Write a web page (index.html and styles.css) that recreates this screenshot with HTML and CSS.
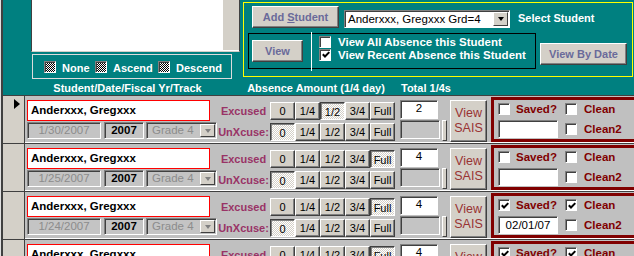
FILE: index.html
```html
<!DOCTYPE html>
<html lang="en">
<head>
    <meta charset="UTF-8">
    <title>Student Absence</title>
    <link rel="stylesheet" href="styles.css">
</head>
<body>
<div class="form">
  <div class="frame">
    <div class="head">
      <div class="head-top">
        <div class="list-col">
          <div class="listbox"><div class="list-scroll"></div></div>
          <div class="sort-frame">
            <div class="opt opt-none"><span class="chk dither"></span><span class="opt-text">None</span></div>
            <div class="opt opt-asc"><span class="chk dither"></span><span class="opt-text">Ascend</span></div>
            <div class="opt"><span class="chk dither"></span><span class="opt-text">Descend</span></div>
          </div>
        </div>
        <div class="student-panel">
          <div class="row-a">
            <button class="btn btn-add">Add <u>S</u>tudent</button>
            <div class="combo sunk">
              <span class="combo-text">Anderxxx, Gregxxx Grd=4</span>
              <span class="combo-arrow"><span class="arrow"></span></span>
            </div>
            <span class="select-label">Select Student</span>
          </div>
          <div class="row-b">
            <div class="view-box">
              <button class="btn btn-view">View</button>
              <div class="vline"></div>
              <div class="view-opts">
                <div class="view-opt"><span class="chk"></span>View All Absence this Student</div>
                <div class="view-opt"><span class="chk"><svg viewBox="0 0 8 8" width="8" height="8"><path d="M0.8 3.2l2.2 2.3 4.3-4.4" fill="none" stroke="#000" stroke-width="2"/></svg></span>View Recent Absence this Student</div>
              </div>
            </div>
            <button class="btn btn-date">View By Date</button>
          </div>
        </div>
      </div>
      <div class="head-labels">
        <span class="hl-student">Student/Date/Fiscal Yr/Track</span>
        <span class="hl-amount">Absence Amount (1/4 day)</span>
        <span class="hl-total">Total 1/4s</span>
      </div>
    </div>

    <!-- record 1 (current) -->
    <div class="row">
      <div class="sel"><span class="pointer"></span></div>
      <div class="student">
        <div class="name">Anderxxx, Gregxxx</div>
        <div class="sub">
          <div class="date sunk">1/30/2007</div>
          <div class="year sunk">2007</div>
          <div class="grade sunk"><span class="grade-text">Grade 4</span><span class="combo-arrow"><span class="arrow off"></span></span></div>
        </div>
      </div>
      <div class="kinds"><span class="kind">Excused</span><span class="kind">UnXcuse:</span></div>
      <div class="amounts">
        <div class="amt-row"><span class="amt">0</span><span class="amt">1/4</span><span class="amt down">1/2</span><span class="amt">3/4</span><span class="amt">Full</span></div>
        <div class="amt-row"><span class="amt down">0</span><span class="amt">1/4</span><span class="amt">1/2</span><span class="amt">3/4</span><span class="amt">Full</span></div>
      </div>
      <div class="total">
        <div class="total-box sunk">2</div>
        <div class="total-sub"><div class="total-off sunk"></div><div class="total-bar"></div></div>
      </div>
      <div class="sais">View<br>SAIS</div>
      <div class="save">
        <div class="save-line"><span class="chk"></span><span class="save-label">Saved?</span><span class="chk"></span><span class="save-label">Clean</span></div>
        <div class="save-line second"><div class="save-date sunk"></div><span class="chk"></span><span class="save-label">Clean2</span></div>
      </div>
    </div>

    <!-- record 2 -->
    <div class="row">
      <div class="sel"></div>
      <div class="student">
        <div class="name">Anderxxx, Gregxxx</div>
        <div class="sub">
          <div class="date sunk">1/25/2007</div>
          <div class="year sunk">2007</div>
          <div class="grade sunk"><span class="grade-text">Grade 4</span><span class="combo-arrow"><span class="arrow off"></span></span></div>
        </div>
      </div>
      <div class="kinds"><span class="kind">Excused</span><span class="kind">UnXcuse:</span></div>
      <div class="amounts">
        <div class="amt-row"><span class="amt">0</span><span class="amt">1/4</span><span class="amt">1/2</span><span class="amt">3/4</span><span class="amt down">Full</span></div>
        <div class="amt-row"><span class="amt down">0</span><span class="amt">1/4</span><span class="amt">1/2</span><span class="amt">3/4</span><span class="amt">Full</span></div>
      </div>
      <div class="total">
        <div class="total-box sunk">4</div>
        <div class="total-sub"><div class="total-off sunk"></div><div class="total-bar"></div></div>
      </div>
      <div class="sais">View<br>SAIS</div>
      <div class="save">
        <div class="save-line"><span class="chk"></span><span class="save-label">Saved?</span><span class="chk"></span><span class="save-label">Clean</span></div>
        <div class="save-line second"><div class="save-date sunk"></div><span class="chk"></span><span class="save-label">Clean2</span></div>
      </div>
    </div>

    <!-- record 3 -->
    <div class="row">
      <div class="sel"></div>
      <div class="student">
        <div class="name">Anderxxx, Gregxxx</div>
        <div class="sub">
          <div class="date sunk">1/24/2007</div>
          <div class="year sunk">2007</div>
          <div class="grade sunk"><span class="grade-text">Grade 4</span><span class="combo-arrow"><span class="arrow off"></span></span></div>
        </div>
      </div>
      <div class="kinds"><span class="kind">Excused</span><span class="kind">UnXcuse:</span></div>
      <div class="amounts">
        <div class="amt-row"><span class="amt">0</span><span class="amt">1/4</span><span class="amt">1/2</span><span class="amt">3/4</span><span class="amt down">Full</span></div>
        <div class="amt-row"><span class="amt down">0</span><span class="amt">1/4</span><span class="amt">1/2</span><span class="amt">3/4</span><span class="amt">Full</span></div>
      </div>
      <div class="total">
        <div class="total-box sunk">4</div>
        <div class="total-sub"><div class="total-off sunk"></div><div class="total-bar"></div></div>
      </div>
      <div class="sais">View<br>SAIS</div>
      <div class="save">
        <div class="save-line"><span class="chk"><svg viewBox="0 0 8 8" width="8" height="8"><path d="M0.8 3.2l2.2 2.3 4.3-4.4" fill="none" stroke="#000" stroke-width="2"/></svg></span><span class="save-label">Saved?</span><span class="chk"><svg viewBox="0 0 8 8" width="8" height="8"><path d="M0.8 3.2l2.2 2.3 4.3-4.4" fill="none" stroke="#000" stroke-width="2"/></svg></span><span class="save-label">Clean</span></div>
        <div class="save-line second"><div class="save-date sunk">02/01/07</div><span class="chk"></span><span class="save-label">Clean2</span></div>
      </div>
    </div>

    <!-- record 4 -->
    <div class="row">
      <div class="sel"></div>
      <div class="student">
        <div class="name">Anderxxx, Gregxxx</div>
        <div class="sub">
          <div class="date sunk">1/23/2007</div>
          <div class="year sunk">2007</div>
          <div class="grade sunk"><span class="grade-text">Grade 4</span><span class="combo-arrow"><span class="arrow off"></span></span></div>
        </div>
      </div>
      <div class="kinds"><span class="kind">Excused</span><span class="kind">UnXcuse:</span></div>
      <div class="amounts">
        <div class="amt-row"><span class="amt">0</span><span class="amt">1/4</span><span class="amt">1/2</span><span class="amt">3/4</span><span class="amt down">Full</span></div>
        <div class="amt-row"><span class="amt down">0</span><span class="amt">1/4</span><span class="amt">1/2</span><span class="amt">3/4</span><span class="amt">Full</span></div>
      </div>
      <div class="total">
        <div class="total-box sunk">4</div>
        <div class="total-sub"><div class="total-off sunk"></div><div class="total-bar"></div></div>
      </div>
      <div class="sais">View<br>SAIS</div>
      <div class="save">
        <div class="save-line"><span class="chk"><svg viewBox="0 0 8 8" width="8" height="8"><path d="M0.8 3.2l2.2 2.3 4.3-4.4" fill="none" stroke="#000" stroke-width="2"/></svg></span><span class="save-label">Saved?</span><span class="chk"><svg viewBox="0 0 8 8" width="8" height="8"><path d="M0.8 3.2l2.2 2.3 4.3-4.4" fill="none" stroke="#000" stroke-width="2"/></svg></span><span class="save-label">Clean</span></div>
        <div class="save-line second"><div class="save-date sunk">02/01/07</div><span class="chk"></span><span class="save-label">Clean2</span></div>
      </div>
    </div>
  </div>
</div>
</body>
</html>
```

FILE: styles.css
```css
body {
    margin: 0;
    font-family: "Liberation Sans", Arial, sans-serif;
    font-size: 11px;
    overflow: hidden;
}
.form {
    width: 633px;
    height: 256px;
    overflow: hidden;
    border-left: 1px solid #e0e0e0;
    background: #c0c0c0;
}
.frame {
    border-left: 2px solid #404040;
}

/* shared 3d bits */
.sunk {
    box-sizing: border-box;
    border: 1px solid;
    border-color: #808080 #fff #fff #808080;
    box-shadow: inset 1px 1px #404040;
}
.btn {
    box-sizing: border-box;
    padding: 0;
    font: bold 11px "Liberation Sans", Arial, sans-serif;
    color: #6a6a9a;
    background: #d4d0c8;
    border: 1px solid;
    border-color: #fff #404040 #404040 #fff;
    box-shadow: inset -1px -1px #808080;
    flex: none;
}
.btn u {
    text-decoration: underline;
}
.chk {
    box-sizing: border-box;
    display: inline-flex;
    align-items: center;
    justify-content: center;
    width: 12px;
    height: 12px;
    flex: none;
    background: #fff;
    border: 1px solid;
    border-color: #808080 #fff #fff #808080;
    box-shadow: inset 1px 1px #404040;
}
.chk svg {
    margin: 1px 0 0 1px;
}
.chk.dither {
    background: repeating-conic-gradient(#000 0 25%, #fff 0 50%) 0 0 / 2px 2px;
}

/* header */
.head {
    background: #008080;
    height: 96px;
    box-sizing: border-box;
    border-bottom: 1px solid #404040;
    color: #fff;
    font-weight: bold;
}
.head-top {
    display: flex;
    height: 80px;
}
.list-col {
    margin-left: 28px;
    width: 209px;
    flex: none;
}
.listbox {
    box-sizing: border-box;
    height: 52px;
    background: #fff;
    border-left: 1px solid #404040;
    border-right: 1px solid #404040;
    border-bottom: 1px solid #d4d0c8;
    display: flex;
    justify-content: flex-end;
}
.list-scroll {
    width: 16px;
    height: 50px;
    background: #d4d0c8;
}
.sort-frame {
    box-sizing: border-box;
    width: 200px;
    height: 25px;
    margin: 2px 0 0 1px;
    border: 1px solid #dcdcdc;
    display: flex;
    align-items: center;
    padding-left: 11px;
}
.opt {
    display: flex;
    align-items: center;
    gap: 6px;
}
.opt-none {
    width: 51px;
}
.opt-asc {
    width: 63px;
}
.opt-text {
    padding-top: 3px;
}

.student-panel {
    box-sizing: border-box;
    margin: 2px 0 0 3px;
    width: 390px;
    height: 75px;
    border: 1px solid #ffff00;
    padding: 3px 0 0 8px;
}
.row-a {
    display: flex;
    align-items: flex-start;
}
.btn-add {
    width: 87px;
    height: 22px;
}
.combo {
    display: flex;
    margin: 4px 0 0 5px;
    width: 166px;
    height: 18px;
    background: #fff;
    padding: 1px;
}
.combo-text {
    flex: 1;
    color: #000;
    font-weight: normal;
    font-size: 11.5px;
    line-height: 15px;
    padding-left: 2px;
}
.combo-arrow {
    box-sizing: border-box;
    width: 15px;
    height: 100%;
    background: #d4d0c8;
    border: 1px solid;
    border-color: #fff #404040 #404040 #fff;
    display: flex;
    align-items: center;
    justify-content: center;
    margin-left: auto;
}
.arrow {
    width: 0;
    height: 0;
    border-left: 3px solid transparent;
    border-right: 3px solid transparent;
    border-top: 4px solid #000;
}
.arrow.off {
    border-top-color: #808080;
}
.select-label {
    margin: 6px 0 0 8px;
    line-height: 13px;
}
.row-b {
    display: flex;
    align-items: flex-start;
    margin: 5px 0 0 -4px;
}
.view-box {
    box-sizing: border-box;
    display: flex;
    align-items: flex-start;
    width: 288px;
    height: 36px;
    border: 1px solid #000;
    padding-left: 3px;
}
.btn-view {
    margin-top: 6px;
    width: 51px;
    height: 22px;
}
.vline {
    align-self: stretch;
    width: 1px;
    background: #fff;
    margin: -2px 0 -3px 8px;
}
.view-opts {
    margin-left: 7px;
    padding-top: 1px;
}
.view-opt {
    display: flex;
    align-items: center;
    gap: 7px;
    height: 13px;
    font-size: 11.5px;
}
.btn-date {
    margin: 10px 0 0 4px;
    width: 87px;
    height: 22px;
}
.head-labels {
    display: flex;
    align-items: center;
    height: 15px;
}
.hl-student {
    margin-left: 49px;
    width: 151px;
    text-align: center;
}
.hl-amount {
    margin-left: 37px;
    width: 152px;
    text-align: center;
}
.hl-total {
    margin-left: 9px;
}

/* detail rows */
.row {
    display: flex;
    height: 48px;
    box-sizing: border-box;
    border-bottom: 1px solid #404040;
    box-shadow: inset 0 -1px #fff;
}
.sel {
    width: 21px;
    flex: none;
    background: #d4d0c8;
    border-right: 1px solid #404040;
}
.pointer {
    display: block;
    width: 0;
    height: 0;
    margin: 3px 0 0 11px;
    border-left: 6px solid #000;
    border-top: 5px solid transparent;
    border-bottom: 5px solid transparent;
}
.student {
    width: 190px;
    flex: none;
    margin-left: 2px;
    padding-top: 4px;
}
.name {
    box-sizing: border-box;
    width: 183px;
    height: 21px;
    border: 1px solid #ff0000;
    background: #fff;
    font-weight: bold;
    font-size: 11.5px;
    line-height: 18px;
    padding-left: 3px;
}
.sub {
    display: flex;
    margin-top: 1px;
    height: 17px;
}
.date {
    width: 74px;
    color: #8c8c8c;
    text-align: center;
    line-height: 15px;
    font-size: 11.5px;
    background: #c4c4c4;
}
.year {
    width: 40px;
    margin-left: 3px;
    text-align: center;
    font-weight: bold;
    font-size: 11.5px;
    line-height: 15px;
    background: #c4c4c4;
}
.grade {
    display: flex;
    width: 71px;
    margin-left: 2px;
    padding: 1px;
    background: #c4c4c4;
}
.grade-text {
    color: #8c8c8c;
    font-size: 11.5px;
    line-height: 13px;
    padding-left: 4px;
}
.kinds {
    width: 53px;
    flex: none;
    display: flex;
    flex-direction: column;
    align-items: center;
    padding-top: 7px;
    color: #993366;
    font-weight: bold;
    font-size: 11px;
}
.kind {
    line-height: 16px;
}
.kind + .kind {
    margin-top: 5px;
}
.amounts {
    width: 125px;
    flex: none;
    padding-top: 6px;
}
.amt-row {
    display: flex;
    height: 18px;
}
.amt-row + .amt-row {
    margin-top: 3px;
}
.amt {
    box-sizing: border-box;
    width: 25px;
    height: 18px;
    text-align: center;
    line-height: 16px;
    background: #d4d0c8;
    border: 1px solid;
    border-color: #fff #404040 #404040 #fff;
    box-shadow: inset -1px -1px #808080;
}
.amt.down {
    border-color: #404040 #fff #fff #404040;
    box-shadow: inset 1px 1px #808080;
    background: repeating-conic-gradient(#fff 0 25%, #d4d0c8 0 50%) 0 0 / 2px 2px;
    line-height: 18px;
}
.total {
    width: 47px;
    flex: none;
    margin-left: 5px;
    padding-top: 4px;
}
.total-box {
    width: 38px;
    height: 19px;
    background: #fff;
    text-align: center;
    line-height: 15px;
    font-size: 11.5px;
}
.total-sub {
    display: flex;
    margin-top: 1px;
}
.total-off {
    width: 41px;
    height: 19px;
    background: #c4c4c4;
}
.total-bar {
    box-sizing: border-box;
    width: 5px;
    height: 21px;
    margin-left: 2px;
    background: #d4d0c8;
    border: 1px solid;
    border-color: #fff #404040 #404040 #fff;
}
.sais {
    box-sizing: border-box;
    flex: none;
    display: flex;
    align-items: center;
    justify-content: center;
    margin: 4px 0 0 3px;
    width: 37px;
    height: 42px;
    background: #d4d0c8;
    border: 1px solid;
    border-color: #fff #404040 #404040 #fff;
    box-shadow: inset -1px -1px #808080;
    color: #993333;
    font-size: 12.5px;
    line-height: 15px;
    text-align: center;
}
.save {
    box-sizing: border-box;
    flex: none;
    margin: 1px 0 0 4px;
    width: 146px;
    height: 45px;
    border: 3px solid #800000;
    padding: 3px 0 0 4px;
}
.save-line {
    display: flex;
    align-items: center;
    height: 12px;
}
.save-line.second {
    margin-top: 5px;
    height: 18px;
}
.save-label {
    color: #800000;
    font-weight: bold;
    font-size: 11.5px;
    margin-left: 6px;
    width: 49px;
}
.chk + .save-label + .chk + .save-label,
.save-date + .chk + .save-label {
    margin-left: 7px;
}
.save-date {
    width: 60px;
    height: 18px;
    margin-right: 7px;
    background: #fff;
    text-align: center;
    line-height: 16px;
    font-size: 11.5px;
}
```
